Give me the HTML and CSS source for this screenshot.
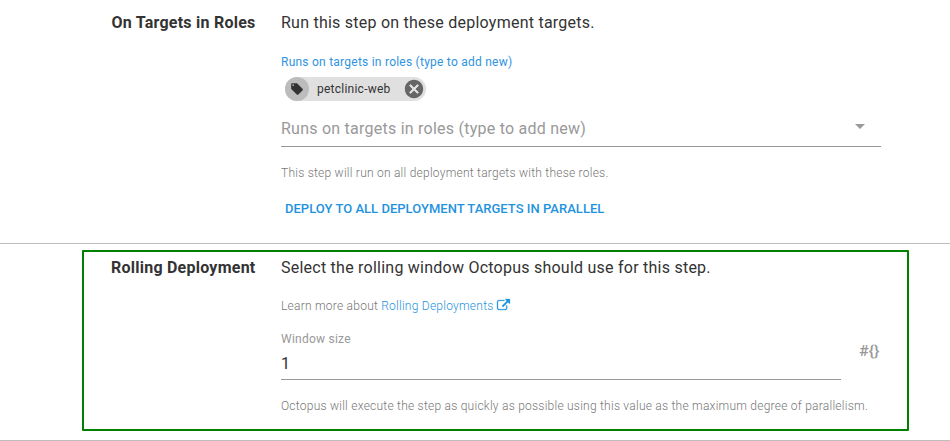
FILE: index.html
```html
<!DOCTYPE html>
<html lang="en">
<head>
<meta charset="utf-8">
<title>Process step</title>
<link rel="stylesheet" href="styles.css">
</head>
<body>
<section class="row targets">
  <h2 class="title">On Targets in Roles</h2>
  <div class="content">
    <p class="summary">Run this step on these deployment targets.</p>
    <div class="label active">Runs on targets in roles (type to add new)</div>
    <div class="chip">
      <span class="avatar"><svg width="14" height="14" viewBox="0 0 24 24"><path fill="#333" fill-rule="evenodd" d="M21.41 11.58l-9-9C12.05 2.22 11.55 2 11 2H4c-1.1 0-2 .9-2 2v7c0 .55.22 1.05.59 1.42l9 9c.36.36.86.58 1.41.58s1.05-.22 1.41-.59l7-7c.37-.36.59-.86.59-1.41s-.23-1.06-.59-1.42zM5.5 7C4.67 7 4 6.33 4 5.500S4.670 4 5.500 4 7 4.670 7 5.500 6.330 7 5.500 7z"/></svg></span>
      <span class="chip-text">petclinic-web</span>
      <svg class="remove" width="22" height="22" viewBox="0 0 24 24"><path fill="#666" d="M12 2C6.470 2 2 6.470 2 12s4.470 10 10 10 10-4.470 10-10S17.530 2 12 2zm5 13.590L15.590 17 12 13.410 8.410 17 7 15.590 10.590 12 7 8.410 8.410 7 12 10.590 15.590 7 17 8.410 13.410 12 17 15.590z"/><path stroke="#e0e0e0" stroke-width="2.200" d="M7.500 7.500l9 9M16.500 7.500l-9 9"/></svg>
    </div>
    <div class="select">
      <span class="placeholder">Runs on targets in roles (type to add new)</span>
      <svg class="arrow" width="24" height="24" viewBox="0 0 24 24"><path fill="#999" d="M7 10l5 5 5-5z"/></svg>
    </div>
    <p class="note">This step will run on all deployment targets with these roles.</p>
    <a class="action">DEPLOY TO ALL DEPLOYMENT TARGETS IN PARALLEL</a>
  </div>
</section>
<section class="window-section">
  <div class="row highlight">
    <h2 class="title">Rolling Deployment</h2>
    <div class="content">
      <p class="summary">Select the rolling window Octopus should use for this step.</p>
      <p class="note learn">Learn more about <a class="link">Rolling Deployments <svg class="external" width="13" height="12" viewBox="0 0 1792 1664"><path fill="#1f93de" stroke="#1f93de" stroke-width="40" d="M1408 928v320q0 119-84.500 203.500T1120 1536H288q-119 0-203.500-84.500T0 1248V416q0-119 84.500-203.500T288 128h704q14 0 23 9t9 23v64q0 14-9 23t-23 9H288q-66 0-113 47t-47 113v832q0 66 47 113t113 47h832q66 0 113-47t47-113V928q0-14 9-23t23-9h64q14 0 23 9t9 23zm384-864v512q0 26-19 45t-45 19-45-19l-176-176-652 652q-10 10-23 10t-23-10L695 983q-10-10-10-23t10-23l652-652-176-176q-19-19-19-45t19-45 45-19h512q26 0 45 19t19 45z"/></svg></a></p>
      <div class="field">
        <div class="input">
          <div class="label">Window size</div>
          <div class="value">1</div>
        </div>
        <span class="variable">#{}</span>
      </div>
      <p class="note">Octopus will execute the step as quickly as possible using this value as the maximum degree of parallelism.</p>
    </div>
  </div>
</section>
</body>
</html>
```
FILE: styles.css
```css
* { box-sizing: border-box; }
body { margin: 0; background: #fff; color: #333; font-family: Roboto, sans-serif; font-size: 16px; letter-spacing: .24px; }
h2, p { margin: 0; }
.row { display: flex; }
.targets { height: 244px; padding: 11px 0 0 80px; border-bottom: 1px solid #bdbdbd; }
.title { width: 176px; padding-right: .5px; text-align: right; font-size: 16px; line-height: 24px; font-weight: 700; white-space: nowrap; }
.content { width: 600px; margin-left: 25px; white-space: nowrap; }
.summary { font-size: 16px; line-height: 24px; }
.label { font-size: 12px; line-height: 18px; color: #999; }
.label.active { margin-top: 18px; color: #2f93e0; }
.chip { display: flex; align-items: center; width: 141px; height: 24px; margin: 6px 0 0 4px; border-radius: 12px; background: #e0e0e0; }
.avatar { display: flex; align-items: center; justify-content: center; width: 24px; height: 24px; border-radius: 50%; background: #bcbcbc; }
.chip-text { width: 86px; margin-left: 8px; font-size: 12px; }
.remove { flex: none; }
.select { display: flex; align-items: center; justify-content: space-between; height: 46px; padding: 10px 9px 0 0; border-bottom: 1px solid #999; }
.placeholder { color: #999; }
.arrow { margin-bottom: 5px; }
.note { font-size: 12px; line-height: 20px; font-weight: 300; color: #777; }
.select + .note { margin-top: 16px; }
.action { display: block; margin: 16px 0 0 4px; font-size: 13px; line-height: 20px; font-weight: 500; letter-spacing: .02px; color: #1f93de; }
.window-section { height: 197px; padding: 6px 0 0 82px; border-bottom: 1px solid #bdbdbd; }
.highlight { width: 827px; height: 181px; padding-top: 4px; border: 2px solid #008000; border-radius: 1px; }
.highlight .title { width: 172px; }
.learn { margin-top: 16px; }
.link { color: #1f93de; }
.external { margin-left: .5px; overflow: visible; vertical-align: -1px; }
.field { display: flex; align-items: center; margin-top: 14px; }
.input { width: 560px; height: 50px; border-bottom: 1px solid #999; }
.value { margin-top: 4px; line-height: 24px; }
.variable { margin: 0 0 8px 18px; font-size: 14px; font-weight: 500; letter-spacing: 0; color: #999; transform: scaleX(1.15); transform-origin: left; }
.field + .note { margin-top: 16px; }
```
